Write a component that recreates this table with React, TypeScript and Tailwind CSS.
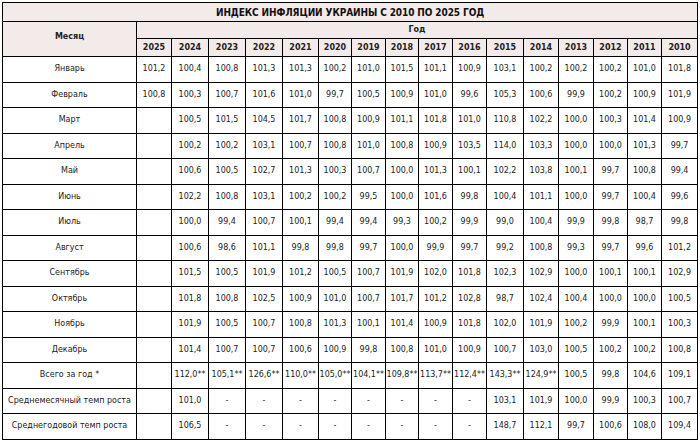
const years = ["2025", "2024", "2023", "2022", "2021", "2020", "2019", "2018", "2017", "2016", "2015", "2014", "2013", "2012", "2011", "2010"];
const colWidths = [35, 37, 37, 37, 36, 33, 34, 33, 34, 34, 37, 35, 35, 34, 34, 36];

const rows: [string, string[]][] = [
  ["Январь", ["101,2", "100,4", "100,8", "101,3", "101,3", "100,2", "101,0", "101,5", "101,1", "100,9", "103,1", "100,2", "100,2", "100,2", "101,0", "101,8"]],
  ["Февраль", ["100,8", "100,3", "100,7", "101,6", "101,0", "99,7", "100,5", "100,9", "101,0", "99,6", "105,3", "100,6", "99,9", "100,2", "100,9", "101,9"]],
  ["Март", ["", "100,5", "101,5", "104,5", "101,7", "100,8", "100,9", "101,1", "101,8", "101,0", "110,8", "102,2", "100,0", "100,3", "101,4", "100,9"]],
  ["Апрель", ["", "100,2", "100,2", "103,1", "100,7", "100,8", "101,0", "100,8", "100,9", "103,5", "114,0", "103,3", "100,0", "100,0", "101,3", "99,7"]],
  ["Май", ["", "100,6", "100,5", "102,7", "101,3", "100,3", "100,7", "100,0", "101,3", "100,1", "102,2", "103,8", "100,1", "99,7", "100,8", "99,4"]],
  ["Июнь", ["", "102,2", "100,8", "103,1", "100,2", "100,2", "99,5", "100,0", "101,6", "99,8", "100,4", "101,1", "100,0", "99,7", "100,4", "99,6"]],
  ["Июль", ["", "100,0", "99,4", "100,7", "100,1", "99,4", "99,4", "99,3", "100,2", "99,9", "99,0", "100,4", "99,9", "99,8", "98,7", "99,8"]],
  ["Август", ["", "100,6", "98,6", "101,1", "99,8", "99,8", "99,7", "100,0", "99,9", "99,7", "99,2", "100,8", "99,3", "99,7", "99,6", "101,2"]],
  ["Сентябрь", ["", "101,5", "100,5", "101,9", "101,2", "100,5", "100,7", "101,9", "102,0", "101,8", "102,3", "102,9", "100,0", "100,1", "100,1", "102,9"]],
  ["Октябрь", ["", "101,8", "100,8", "102,5", "100,9", "101,0", "100,7", "101,7", "101,2", "102,8", "98,7", "102,4", "100,4", "100,0", "100,0", "100,5"]],
  ["Ноябрь", ["", "101,9", "100,5", "100,7", "100,8", "101,3", "100,1", "101,4", "100,9", "101,8", "102,0", "101,9", "100,2", "99,9", "100,1", "100,3"]],
  ["Декабрь", ["", "101,4", "100,7", "100,7", "100,6", "100,9", "99,8", "100,8", "101,0", "100,9", "100,7", "103,0", "100,5", "100,2", "100,2", "100,8"]],
  ["Всего за год *", ["", "112,0**", "105,1**", "126,6**", "110,0**", "105,0**", "104,1**", "109,8**", "113,7**", "112,4**", "143,3**", "124,9**", "100,5", "99,8", "104,6", "109,1"]],
  ["Среднемесячный темп роста", ["", "101,0", "-", "-", "-", "-", "-", "-", "-", "-", "103,1", "101,9", "100,0", "99,9", "100,3", "100,7"]],
  ["Среднегодовой темп роста", ["", "106,5", "-", "-", "-", "-", "-", "-", "-", "-", "148,7", "112,1", "99,7", "100,6", "108,0", "109,4"]],
];

export default function App() {
  return (
    <div className="w-[700px] h-[442px] bg-white pl-[2px] pt-[2px] text-[#222]" style={{ fontFamily: '"DejaVu Sans", Verdana, sans-serif' }}>
      <table className="table-fixed border-collapse w-[695px] text-[8px]">
        <colgroup>
          <col className="w-[134px]" />
          {colWidths.map((w, i) => (
            <col key={i} style={{ width: w }} />
          ))}
        </colgroup>
        <thead>
          <tr className="h-[19px] bg-[#f3eaea]">
            <th
              colSpan={17}
              className="border border-black p-0 text-center text-[10px] font-bold text-[#111] tracking-[-0.1px]"
              style={{ fontFamily: '"Liberation Sans Narrow", "DejaVu Sans Condensed", "Liberation Sans", sans-serif' }}
            >
              ИНДЕКС ИНФЛЯЦИИ УКРАИНЫ С 2010 ПО 2025 ГОД
            </th>
          </tr>
          <tr className="h-[17px] bg-[#f3eaea]">
            <th rowSpan={2} className="border border-black p-0 pb-[4px] text-center font-bold">
              Месяц
            </th>
            <th colSpan={16} className="border border-black p-0 text-center font-bold">
              Год
            </th>
          </tr>
          <tr className="h-[18px] bg-[#f3eaea]">
            {years.map((y) => (
              <th key={y} className="border border-black p-0 text-center font-bold">
                {y}
              </th>
            ))}
          </tr>
        </thead>
        <tbody>
          {rows.map(([label, vals]) => (
            <tr key={label} className="h-[25.5px]">
              <td className="border border-black p-0 text-center whitespace-nowrap">{label}</td>
              {vals.map((v, i) => (
                <td key={i} className="border border-black p-0 text-center whitespace-nowrap">
                  {v}
                </td>
              ))}
            </tr>
          ))}
        </tbody>
      </table>
    </div>
  );
}
